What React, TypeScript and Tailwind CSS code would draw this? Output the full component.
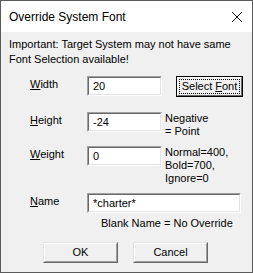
import React from 'react';

function Sunken({ value, width }: { value: string; width: string }) {
  return (
    <div className={`${width} h-[20px] border-t border-l border-t-[#a0a0a0] border-l-[#a0a0a0] border-b border-r border-b-white border-r-white`}>
      <div className="h-full border-t border-l border-t-[#696969] border-l-[#696969] border-b border-r border-b-[#e3e3e3] border-r-[#e3e3e3] bg-white px-[4px] leading-[16px]">
        {value}
      </div>
    </div>
  );
}

function Btn({ children, className = '' }: { children: React.ReactNode; className?: string }) {
  return (
    <div className={`w-[75px] h-[21px] border-t border-l border-t-[#e3e3e3] border-l-[#e3e3e3] border-b border-r border-b-[#696969] border-r-[#696969] ${className}`}>
      <div className="h-full border-t border-l border-t-white border-l-white border-b border-r border-b-[#a0a0a0] border-r-[#a0a0a0] bg-[#f0f0f0] flex items-center justify-center">
        {children}
      </div>
    </div>
  );
}

function Label({ first, rest }: { first: string; rest: string }) {
  return (
    <span className="w-[57px] mt-[1px] leading-[15px]">
      <span className="underline underline-offset-[1px]">{first}</span>
      {rest}
    </span>
  );
}

export default function App() {
  return (
    <div className="w-[253px] h-[273px] border border-[#5a5a5a] bg-[#f0f0f0] flex flex-col font-['Liberation_Sans',Arial,sans-serif] text-[11px] text-black">
      <div className="h-[31px] shrink-0 bg-white flex items-center justify-between pl-[8px] pr-[10px] text-[12px]">
        <span>Override System Font</span>
        <svg width="10" height="10" viewBox="0 0 10 10">
          <path d="M0 0L10 10M10 0L0 10" stroke="#111" strokeWidth="1" />
        </svg>
      </div>

      <div className="flex flex-col pl-[8px] pt-[5px]">
        <p className="leading-[15px]">
          Important: Target System may not have same
          <br />
          Font Selection available!
        </p>

        <div className="flex items-start pl-[21px] mt-[9px]">
          <Label first="W" rest="idth" />
          <Sunken value="20" width="w-[75px]" />
          <div className="ml-[14px] w-[67px] h-[21px] border border-black">
            <div className="h-full border-t border-l border-t-white border-l-white border-b border-r border-b-[#696969] border-r-[#696969] bg-[#f0f0f0] p-[1px]">
              <div className="h-full border border-dotted border-black flex items-center justify-center leading-[13px]">
                Select <span className="underline underline-offset-[1px] ml-[3px]">F</span>ont
              </div>
            </div>
          </div>
        </div>

        <div className="flex items-start pl-[21px] mt-[15px]">
          <Label first="H" rest="eight" />
          <Sunken value="-24" width="w-[75px]" />
          <p className="ml-[3px] leading-[13px]">
            Negative
            <br />= Point
          </p>
        </div>

        <div className="flex items-start pl-[21px] mt-[8px]">
          <Label first="W" rest="eight" />
          <Sunken value="0" width="w-[75px]" />
          <p className="ml-[3px] leading-[13px]">
            Normal=400,
            <br />
            Bold=700,
            <br />
            Ignore=0
          </p>
        </div>

        <div className="flex items-start pl-[21px] mt-[8px]">
          <Label first="N" rest="ame" />
          <Sunken value="*charter*" width="w-[154px]" />
        </div>

        <p className="pl-[92px] mt-[3px] leading-[15px]">Blank Name = No Override</p>

        <div className="flex pl-[34px] mt-[11px]">
          <Btn>OK</Btn>
          <Btn className="ml-[15px]">Cancel</Btn>
        </div>
      </div>
    </div>
  );
}
